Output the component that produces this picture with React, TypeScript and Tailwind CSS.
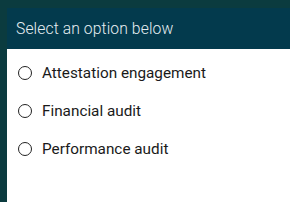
import React, { useState } from 'react';

const options = ['Attestation engagement', 'Financial audit', 'Performance audit'];

export default function App() {
  const [selected, setSelected] = useState<string>('');

  return (
    <div className="w-[290px] h-[202px] bg-[#0b3b3f] pl-[7px] pt-[8px] overflow-hidden" style={{ fontFamily: 'Roboto, sans-serif' }}>
      <div className="h-full bg-white flex flex-col">
        {/* Header */}
        <div className="h-[41px] bg-[#033a4d] flex items-center pl-[9px]">
          <span className="text-[15.7px] font-light text-[#e6eef2] tracking-[0.1px]">Select an option below</span>
        </div>

        {/* Options */}
        <div className="flex flex-col pt-[5px]">
          {options.map((opt) => (
            <label key={opt} className="h-[38px] flex items-center pl-[11px] cursor-pointer">
              <input
                type="radio"
                name="option"
                checked={selected === opt}
                onChange={() => setSelected(opt)}
                className="sr-only"
              />
              <span className="w-[14px] h-[14px] rounded-full border-[1.5px] border-[#222] flex items-center justify-center">
                {selected === opt && <span className="w-[7px] h-[7px] rounded-full bg-[#222]" />}
              </span>
              <span className="ml-[10px] text-[15.3px] text-[#1a1a1a]">{opt}</span>
            </label>
          ))}
        </div>
      </div>
    </div>
  );
}
